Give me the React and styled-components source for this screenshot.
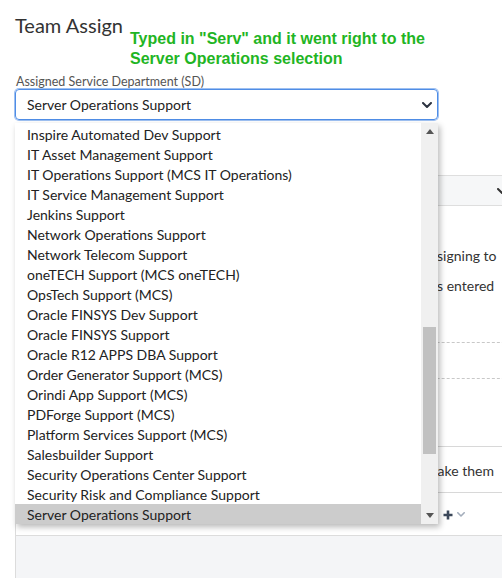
import React from 'react'
import styled, { createGlobalStyle } from 'styled-components'

const departments = [
  'Inspire Automated Dev Support',
  'IT Asset Management Support',
  'IT Operations Support (MCS IT Operations)',
  'IT Service Management Support',
  'Jenkins Support',
  'Network Operations Support',
  'Network Telecom Support',
  'oneTECH Support (MCS oneTECH)',
  'OpsTech Support (MCS)',
  'Oracle FINSYS Dev Support',
  'Oracle FINSYS Support',
  'Oracle R12 APPS DBA Support',
  'Order Generator Support (MCS)',
  'Orindi App Support (MCS)',
  'PDForge Support (MCS)',
  'Platform Services Support (MCS)',
  'Salesbuilder Support',
  'Security Operations Center Support',
  'Security Risk and Compliance Support',
  'Server Operations Support',
]

const selected = 'Server Operations Support'

const GlobalStyle = createGlobalStyle`
  html, body {
    margin: 0;
    background: #fff;
    overflow: hidden;
  }
  body {
    font-family: Lato, "Open Sans", sans-serif;
    color: #222;
  }
`

const Chevron = ({ color = '#2c3340', size = 10 }) => (
  <svg width={size} height={size * 0.6} viewBox="0 0 10 6">
    <polyline
      points="1,1 5,5 9,1"
      fill="none"
      stroke={color}
      strokeWidth="2"
      strokeLinecap="round"
      strokeLinejoin="round"
    />
  </svg>
)

const Triangle = ({ up }) => (
  <svg width="8" height="5" viewBox="0 0 8 5">
    <polygon points={up ? '0,5 4,0 8,5' : '0,0 4,5 8,0'} fill="#555" />
  </svg>
)

const App = () => (
  <>
    <GlobalStyle />
    <Page>
      <Header>
        <Title>Team Assign</Title>
        <Annotation>
          Typed in "Serv" and it went right to the
          <br />
          Server Operations selection
        </Annotation>
      </Header>

      <Field>
        <Label>Assigned Service Department (SD)</Label>
        <SelectWrap>
          <SelectBox>
            <span>{selected}</span>
            <Chevron />
          </SelectBox>
          <Dropdown>
            <Options>
              {departments.map(name => (
                <Option key={name} active={name === selected}>
                  {name}
                </Option>
              ))}
            </Options>
            <Scrollbar>
              <ScrollArrow>
                <Triangle up />
              </ScrollArrow>
              <ScrollTrack>
                <ScrollThumb />
              </ScrollTrack>
              <ScrollArrow>
                <Triangle />
              </ScrollArrow>
            </Scrollbar>
          </Dropdown>
        </SelectWrap>
      </Field>

      <Backdrop>
        <SectionBar>
          <Chevron color="#333" size={10} />
        </SectionBar>
        <Notes>
          <NoteLine indent={409}>assigning to</NoteLine>
          <NoteLine indent={417}>ts entered</NoteLine>
        </Notes>
        <DashedRow />
        <InfoRow>
          <NoteLine indent={411}>make them</NoteLine>
        </InfoRow>
        <TableHead>
          <HeadCell width={63} />
          <HeadCell width={187} />
          <HeadCell width={49} />
          <HeadCell width={67} />
          <HeadCell grow>
            <AddButton>
              <svg width="10" height="10" viewBox="0 0 10 10">
                <path d="M5 0.5v9M0.5 5h9" stroke="#3b4759" strokeWidth="2.6" />
              </svg>
              <Chevron color="#a3adbb" size={8} />
            </AddButton>
          </HeadCell>
        </TableHead>
        <TableBody />
      </Backdrop>
    </Page>
  </>
)

export default App

const Page = styled.div`
  width: 502px;
  height: 578px;
  padding: 13px 0 0 15px;
  box-sizing: border-box;
  overflow: hidden;
`

const Header = styled.div`
  display: flex;
  align-items: flex-start;
  gap: 7px;
`

const Title = styled.h1`
  margin: 0;
  font-size: 20px;
  line-height: 24px;
  font-weight: 400;
  color: #333;
`

const Annotation = styled.div`
  margin-top: 16px;
  font-family: 'Liberation Sans', Arial, sans-serif;
  font-weight: 700;
  font-size: 16px;
  line-height: 20px;
  color: #1fb524;
`

const Field = styled.div`
  margin-top: 6px;
  width: 423px;
`

const Label = styled.div`
  font-size: 12.5px;
  line-height: 14px;
  color: #555;
  padding-left: 1px;
`

const SelectWrap = styled.div`
  position: relative;
`

const SelectBox = styled.div`
  height: 31px;
  box-sizing: border-box;
  border: 1px solid #4f8de6;
  box-shadow: 0 0 0 1px rgba(79, 141, 230, 0.55);
  border-radius: 4px;
  display: flex;
  align-items: center;
  justify-content: space-between;
  padding: 0 5px 0 11px;
  font-size: 14px;
  color: #222;
`

const Dropdown = styled.div`
  position: absolute;
  top: calc(100% + 3px);
  left: 0;
  width: 423px;
  height: 401px;
  background: #fff;
  display: flex;
  box-shadow: 2px 3px 6px rgba(0, 0, 0, 0.28);
  z-index: 10;
`

const Options = styled.ul`
  flex: 1;
  margin: 0;
  padding: 1px 0 0;
  list-style: none;
`

const Option = styled.li`
  height: 20px;
  line-height: 21px;
  padding-left: 12px;
  font-size: 14px;
  color: #222;
  white-space: nowrap;
  background: ${p => (p.active ? '#cccccc' : 'transparent')};
`

const Scrollbar = styled.div`
  width: 17px;
  background: #f0f0f0;
  display: flex;
  flex-direction: column;
`

const ScrollArrow = styled.div`
  height: 17px;
  display: flex;
  align-items: center;
  justify-content: center;
`

const ScrollTrack = styled.div`
  flex: 1;
  padding-top: 187px;
`

const ScrollThumb = styled.div`
  margin: 0 2px;
  height: 127px;
  background: #c1c1c1;
`

const Backdrop = styled.div`
  width: 520px;
  margin-top: 55px;
`

const SectionBar = styled.div`
  height: 31px;
  box-sizing: border-box;
  width: 495px;
  background: #f6f7f8;
  border-top: 1px solid #dedede;
  border-bottom: 1px solid #dedede;
  display: flex;
  align-items: center;
  justify-content: flex-end;
  padding-right: 3px;
`

const Notes = styled.div`
  padding-top: 35px;
`

const NoteLine = styled.div`
  font-size: 14px;
  line-height: 30px;
  color: #333;
  white-space: nowrap;
  padding-left: ${p => p.indent}px;
`

const DashedRow = styled.div`
  margin: 41px 0 67px;
  height: 37px;
  box-sizing: border-box;
  border-top: 1px dashed #c8c8c8;
  border-bottom: 1px dashed #c8c8c8;
`

const InfoRow = styled.div`
  padding: 9px 0 6px;
  border-top: 1px solid #d8d8d8;
  border-bottom: 1px solid #d8d8d8;
`

const TableHead = styled.div`
  display: flex;
  height: 43px;
  box-sizing: border-box;
  border-bottom: 1px solid #dcdcdc;
  border-left: 1px solid #dcdcdc;
`

const HeadCell = styled.div`
  width: ${p => (p.width ? `${p.width}px` : 'auto')};
  flex: ${p => (p.grow ? 1 : 'none')};
  display: flex;
  align-items: center;
  padding-left: ${p => (p.grow ? 61 : 6)}px;
  box-sizing: border-box;
  position: relative;
  & + &::before {
    content: '';
    position: absolute;
    left: 0;
    bottom: 0;
    height: 11px;
    border-left: 1px solid #d0d0d0;
  }
`

const AddButton = styled.div`
  display: flex;
  align-items: center;
  gap: 4px;
  margin-top: 1px;
`

const TableBody = styled.div`
  height: 60px;
  background: #f4f5f7;
  border-left: 1px solid #dcdcdc;
`
